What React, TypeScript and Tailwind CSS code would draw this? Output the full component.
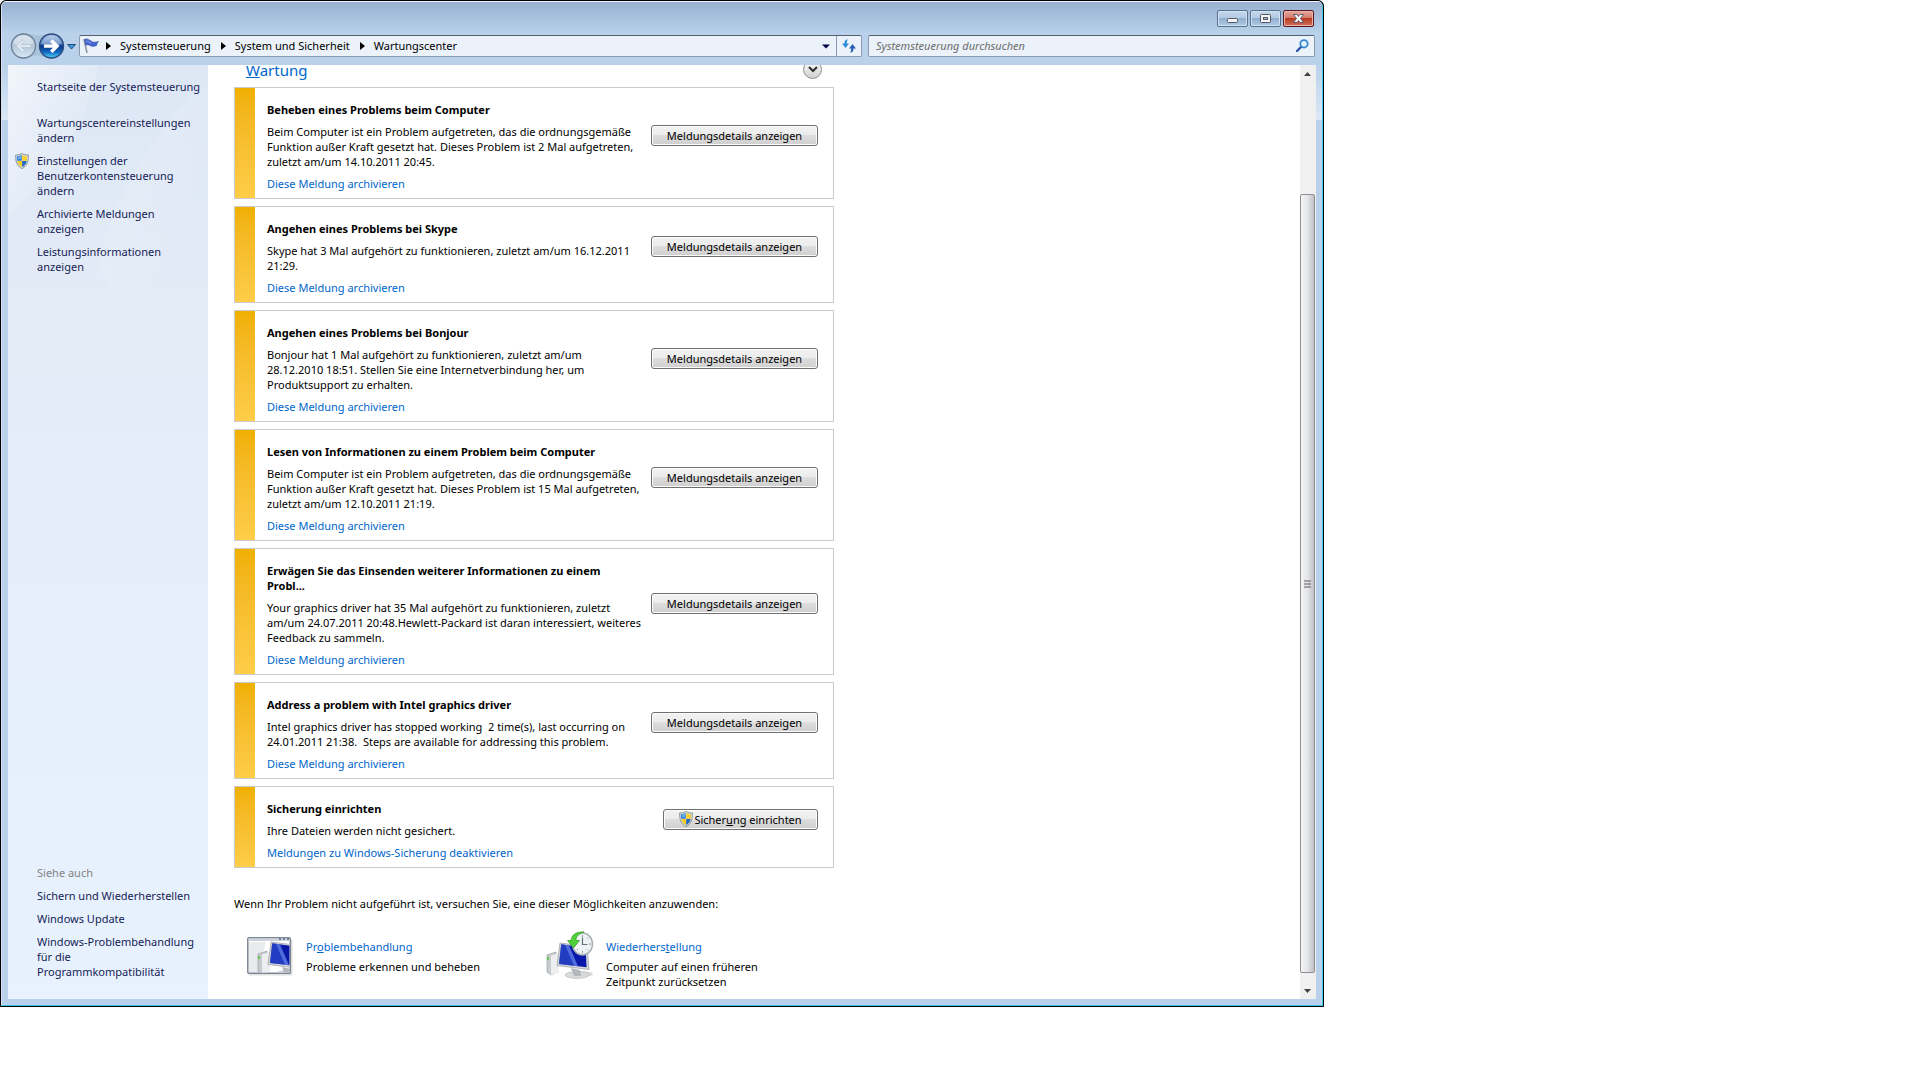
interface Message {
  title: string;
  text: string;
  link: string;
  backup?: boolean;
}

const messages: Message[] = [
  {
    title: 'Beheben eines Problems beim Computer',
    text: 'Beim Computer ist ein Problem aufgetreten, das die ordnungsgemäße\nFunktion außer Kraft gesetzt hat. Dieses Problem ist 2 Mal aufgetreten,\nzuletzt am/um 14.10.2011 20:45.',
    link: 'Diese Meldung archivieren',
  },
  {
    title: 'Angehen eines Problems bei Skype',
    text: 'Skype hat 3 Mal aufgehört zu funktionieren, zuletzt am/um 16.12.2011\n21:29.',
    link: 'Diese Meldung archivieren',
  },
  {
    title: 'Angehen eines Problems bei Bonjour',
    text: 'Bonjour hat 1 Mal aufgehört zu funktionieren, zuletzt am/um\n28.12.2010 18:51. Stellen Sie eine Internetverbindung her, um\nProduktsupport zu erhalten.',
    link: 'Diese Meldung archivieren',
  },
  {
    title: 'Lesen von Informationen zu einem Problem beim Computer',
    text: 'Beim Computer ist ein Problem aufgetreten, das die ordnungsgemäße\nFunktion außer Kraft gesetzt hat. Dieses Problem ist 15 Mal aufgetreten,\nzuletzt am/um 12.10.2011 21:19.',
    link: 'Diese Meldung archivieren',
  },
  {
    title: 'Erwägen Sie das Einsenden weiterer Informationen zu einem\nProbl...',
    text: 'Your graphics driver hat 35 Mal aufgehört zu funktionieren, zuletzt\nam/um 24.07.2011 20:48.Hewlett-Packard ist daran interessiert, weiteres\nFeedback zu sammeln.',
    link: 'Diese Meldung archivieren',
  },
  {
    title: 'Address a problem with Intel graphics driver',
    text: 'Intel graphics driver has stopped working \u00a02 time(s), last occurring on\n24.01.2011 21:38. \u00a0Steps are available for addressing this problem.',
    link: 'Diese Meldung archivieren',
  },
  {
    title: 'Sicherung einrichten',
    text: 'Ihre Dateien werden nicht gesichert.',
    link: 'Meldungen zu Windows-Sicherung deaktivieren',
    backup: true,
  },
];

const crumbs = ['Systemsteuerung', 'System und Sicherheit', 'Wartungscenter'];

const buttonStyle =
  'flex h-[21px] items-center justify-center gap-px rounded-[3px] border border-[#707070] bg-[linear-gradient(#f2f2f2,#ebebeb_50%,#dddddd_50%,#cfcfcf)] whitespace-nowrap inset-shadow-[0_0_0_1px_#fcfcfc]';

function Shield() {
  return (
    <svg className="h-4 w-[14px] shrink-0" viewBox="0 0 14 16" aria-hidden="true">
      <path d="M7 .5C5 1.8 3 2 .7 2 .4 8.500 2 13 7 15.600 12 13 13.600 8.500 13.300 2 11 2 9 1.800 7 .5Z" fill="#dfe4e6" stroke="#7d8b90" strokeWidth=".9" />
      <path d="M6.800 1.900C5.300 2.800 4 3.100 1.900 3.200c0 1.700 0 3.200.3 4.600h4.600Z" fill="#2f7fd6" />
      <path d="M7.200 1.900c1.500.9 2.800 1.200 4.900 1.300 0 1.700 0 3.200-.3 4.600H7.200Z" fill="#fbd02c" />
      <path d="M2.300 8.100c.6 2.700 2 4.800 4.500 6.200V8.100Z" fill="#fbc81e" />
      <path d="M11.700 8.100c-.6 2.700-2 4.800-4.500 6.200V8.100Z" fill="#2468bd" />
      <path d="M3 4c1.400-.1 2.500-.4 3.400-.9v2.500L3.100 6.600Z" fill="#8cc4f5" opacity=".7" />
    </svg>
  );
}

function OrbGradients() {
  return (
    <defs>
      <linearGradient id="orbBack" x1="0" y1="0" x2="0" y2="1">
        <stop offset="0" stopColor="#c5d6e6" />
        <stop offset=".5" stopColor="#b5c8da" />
        <stop offset="1" stopColor="#d9e8f5" />
      </linearGradient>
      <linearGradient id="orbFwd" x1="0" y1="0" x2="0" y2="1">
        <stop offset="0" stopColor="#a9c4e6" />
        <stop offset=".42" stopColor="#3d70b8" />
        <stop offset=".5" stopColor="#0a3684" />
        <stop offset=".75" stopColor="#1368c0" />
        <stop offset="1" stopColor="#4fd8fb" />
      </linearGradient>
    </defs>
  );
}

function Computer() {
  return (
    <>
      <path d="M0 22 9 19v21L4 42 0 39Z" fill="#c9cccf" stroke="#8f9499" strokeWidth=".6" />
      <path d="M4 22.500 12 20v20l-8 2Z" fill="#eceeef" />
      <path d="M1 24v3" stroke="#3fc420" strokeWidth="1.400" />
      <ellipse cx="30" cy="42" rx="12" ry="3.500" fill="#d8dadc" stroke="#adb1b5" strokeWidth=".5" />
      <path d="m24 35 9 2 1 6h-7Z" fill="#b4b8bc" />
      <path d="M13 10 40 13.500 42 36.500 10 32.500Z" fill="#d5d8db" stroke="#989ca1" strokeWidth=".7" />
      <path d="M14.200 11.300 38.600 14.700 39.600 34.200 12 30.900Z" fill="#0a18a8" />
      <path d="M14.200 11.300 22 12.400 31 33.200 12 30.900Z" fill="#3c62dc" opacity=".5" />
      <path d="m18 11.900 4 .5 9 20.800-4-.5Z" fill="#7b9cf5" opacity=".5" />
    </>
  );
}

function TroubleshootIcon() {
  return (
    <svg className="h-12 w-12 shrink-0" viewBox="0 0 48 48" aria-hidden="true">
      <rect x="2.500" y="8.500" width="44" height="36" rx="1" fill="#000" opacity=".12" />
      <rect x="1.800" y="6.800" width="42.500" height="35.500" rx="1" fill="#fff" stroke="#7c8694" strokeWidth="1.500" />
      <path d="M2.500 7.500h41V10h-41Z" fill="#ccd2dc" />
      <path d="M33 8h2M37 8h2M41 8h2" stroke="#56657c" strokeWidth="1.300" />
      <path d="M3 11h17l-8 30H3Z" fill="#e9ebee" />
      <svg x="3" y="10" width="40.500" height="31.500" viewBox="3 10 40.500 31.500">
        <g transform="translate(12 1)">
          <Computer />
        </g>
      </svg>
    </svg>
  );
}

function RestoreIcon() {
  return (
    <svg className="h-12 w-12 shrink-0" viewBox="0 0 48 48" aria-hidden="true">
      <ellipse cx="35" cy="43" rx="12" ry="3" fill="#000" opacity=".15" />
      <g transform="translate(1 2)">
        <Computer />
      </g>
      <ellipse cx="36.500" cy="13" rx="10" ry="11" fill="#eef3f4" stroke="#a8b2b6" strokeWidth="1.500" />
      <path d="M36.500 4v2M36.500 20v2M43 13h2M29 13h2M42 6.500l-1 1M31 19l1-1M42 19.500l-1-1" stroke="#8b969b" />
      <path d="M36.500 6.500V13.500h5" fill="none" stroke="#637178" strokeWidth="1.200" />
      <path d="M38 1C30 .5 25.500 4 25 9.500h-3.500l6 7.500 6-7.500H30C30 5.500 32 3 38 1Z" fill="#4fd03a" stroke="#2f9a24" strokeWidth=".7" />
    </svg>
  );
}

function MessageCard({ message }: { message: Message }) {
  return (
    <section className="flex border border-[#ccc] bg-white">
      <div className="w-5 shrink-0 bg-linear-to-b from-[#f0b000] to-[#ffcd48]" />
      <div className="flex-1 whitespace-pre pt-[14px] pb-[7px] pl-3">
        <h2 className="font-bold">{message.title}</h2>
        <p className="my-[7px]">{message.text}</p>
        <a href="#" className="block text-[#0066cc]">
          {message.link}
        </a>
      </div>
      <div className="flex items-center pr-[15px] pb-4">
        {message.backup ? (
          <button className={buttonStyle + ' w-[155px]'}>
            <Shield />
            <span>
              Sicher<u>u</u>ng einrichten
            </span>
          </button>
        ) : (
          <button className={buttonStyle + ' w-[167px]'}>Meldungsdetails anzeigen</button>
        )}
      </div>
    </section>
  );
}

function TitleBar() {
  const base = 'flex h-[17px] w-[31px] items-center justify-center rounded-[2px] border';
  const blue = ' border-[#56708f] bg-[linear-gradient(#c4d7ea,#b3cae2_48%,#90aecd_50%,#b0cbe6)] inset-shadow-[0_0_0_1px_#d2e2f2]';
  return (
    <div className="flex h-[33px] justify-end gap-[2px] pt-2 pr-2">
      <button aria-label="Minimieren" className={base + blue}>
        <svg className="mt-1 h-[5px] w-[11px]" viewBox="0 0 11 5">
          <rect x=".5" y=".5" width="10" height="4" rx="1" fill="#f6f6f6" stroke="#535666" />
        </svg>
      </button>
      <button aria-label="Maximieren" className={base + blue}>
        <svg className="h-[9px] w-[11px]" viewBox="0 0 11 9">
          <rect x=".5" y=".5" width="10" height="8" rx="1" fill="#f6f6f6" stroke="#535666" />
          <rect x="3.500" y="3.500" width="4" height="2" fill="#a9bdd2" stroke="#535666" />
        </svg>
      </button>
      <button aria-label="Schließen" className={base + ' border-[#5a1620] bg-[linear-gradient(#e6a99e,#d3796b_48%,#b93a22_50%,#d0705a)] inset-shadow-[0_0_0_1px_#e9b4aa]'}>
        <svg className="h-[9px] w-[11px]" viewBox="0 0 11 9">
          <path d="M.5.5H4l1.500 2L7 .5h3.500L7.500 4.500l3 4H7l-1.500-2-1.500 2H.5l3-4Z" fill="#f8f8f8" stroke="#535666" strokeWidth=".9" />
        </svg>
      </button>
    </div>
  );
}

function AddressBar() {
  return (
    <nav className="flex h-[30px] items-start px-[7px]">
      <svg className="-mt-[3px] h-[28px] w-[70px] shrink-0" viewBox="0 0 70 28" aria-hidden="true">
        <OrbGradients />
        <path d="M14 1.500c8 0 9 2 14.500 2S36 1.500 43 1.500a12.500 12.500 0 0 1 0 25c-7 0-9-3-14.500-3s-6.500 3-14.500 3a12.500 12.500 0 0 1 0-25Z" fill="#9fb7d0" opacity=".6" />
        <circle cx="14.500" cy="14" r="12" fill="url(#orbBack)" stroke="#6e8298" strokeWidth="1.300" />
        <path d="M4 11a11 11 0 0 1 21 0c-6 3-15 4-21 0Z" fill="#fff" opacity=".35" />
        <path d="m7 14 6.500-6.500 2 2L12.500 12.500H22v3h-9.500l3 3-2 2Z" fill="#dce7f1" stroke="#a9bccf" strokeWidth=".6" />
        <circle cx="42.500" cy="14" r="12" fill="url(#orbFwd)" stroke="#2b4a7d" strokeWidth="1.300" />
        <path d="M32 11.500a11 11 0 0 1 21 0c-6 2-15 2.500-21 0Z" fill="#fff" opacity=".3" />
        <path d="m50.500 14-7-6.800-2.500 2.500L44 12.400h-9v3.300h9L41 18.500l2.500 2.400Z" fill="#fff" />
        <path d="M58.500 12.500h8L62.500 17Z" fill="#3e9ad6" stroke="#123f75" strokeWidth=".9" />
      </svg>
      <div className="flex h-[22px] flex-1 items-center rounded-[2px] border border-[#8a9bb0] border-t-[#53606f] bg-[#ebf2fa] pl-[2px]">
        <svg className="mb-px h-[18px] w-[18px]" viewBox="0 0 18 18" aria-hidden="true">
          <path d="m2 2 3 14" stroke="#8d96a4" strokeWidth="1.600" />
          <path d="M2.500 2.500c2.500-1.500 4.500 0 6.500 1.500s4 1.500 7.500.5c-1.500 1.200-1.500 2.500-2 4-3 1.300-5 1-6.500 0s-3-1-4.200-.3Z" fill="#4464d0" stroke="#3450a8" strokeWidth=".6" />
          <path d="M4 4.500c2-.7 3.500.8 5 1.800" stroke="#93a9f0" fill="none" />
        </svg>
        {crumbs.map((crumb) => (
          <div key={crumb} className="flex items-center pb-px">
            <svg className="mr-[9px] ml-[6px] h-[8px] w-[5px]" viewBox="0 0 5 8" aria-hidden="true">
              <path d="M0 0v8l5-4Z" fill="#000" />
            </svg>
            <a href="#" className="mr-[4px] text-black">
              {crumb}
            </a>
          </div>
        ))}
        <button aria-label="Vorherige Orte" className="mr-[6px] ml-auto">
          <svg className="h-[5px] w-[8px]" viewBox="0 0 8 5">
            <path d="M0 .5h8L4 4.500Z" fill="#00004c" />
          </svg>
        </button>
        <button aria-label="Aktualisieren" className="flex h-full w-[25px] items-center justify-center border-l border-[#8a9bb0]">
          <svg className="h-[14px] w-[14px]" viewBox="0 0 14 14">
            <path d="M6 .5C3 .5 2.500 2.500 2.500 4.500H0L3.500 9 7 4.500H4.800C4.800 3 5 1.500 6 .5Z" fill="#2f8fd8" />
            <path d="M8 13.500c3 0 3.500-2 3.500-4H14L10.500 5 7 9.500h2.200c0 1.500-.2 3-1.200 4Z" fill="#2c5db5" />
          </svg>
        </button>
      </div>
      <div className="ml-[6px] flex h-[22px] w-[447px] items-center rounded-[2px] border border-[#8a9bb0] border-t-[#53606f] bg-[#ebf2fa] pr-[5px] pb-px pl-[7px]">
        <input
          type="text"
          aria-label="Systemsteuerung durchsuchen"
          placeholder="Systemsteuerung durchsuchen"
          className="min-w-0 flex-1 bg-transparent italic outline-none placeholder:text-[#6d6d6d]"
        />
        <svg className="h-[13px] w-[13px]" viewBox="0 0 13 13" aria-hidden="true">
          <path d="M5.300 7.700 1 12" stroke="#274f9e" strokeWidth="2.200" strokeLinecap="round" />
          <circle cx="8" cy="4.800" r="3.700" fill="#e6f2fc" stroke="#3687cf" strokeWidth="1.800" />
        </svg>
      </div>
    </nav>
  );
}

function Sidebar() {
  return (
    <aside className="relative flex w-[200px] shrink-0 flex-col overflow-hidden bg-linear-to-b from-[#dde7f5] via-[#e3ebf7] via-25% to-[#e8f2ff] pt-[14px] pr-1 pb-5 pl-[29px] text-[#151c55]">
      <svg className="absolute top-0 left-0 h-[300px] w-[200px]" viewBox="0 0 200 300" aria-hidden="true">
        <defs>
          <linearGradient id="glow" x1="0" y1="0" x2="1" y2="1">
            <stop offset="0" stopColor="#fff" stopOpacity=".6" />
            <stop offset=".7" stopColor="#fff" stopOpacity="0" />
          </linearGradient>
        </defs>
        <path d="M0 0h90C80 60 40 120 0 150Z" fill="url(#glow)" />
        <path d="M200 15C150 60 100 140 90 200l40 90h70Z" fill="url(#glow)" opacity=".35" />
      </svg>
      <div className="relative flex flex-1 flex-col gap-2">
        <a href="#" className="mb-[13px] whitespace-nowrap">Startseite der Systemsteuerung</a>
        <a href="#">Wartungscentereinstellungen<br />ändern</a>
        <a href="#" className="-ml-[22px] flex gap-2">
          <Shield />
          <span>Einstellungen der<br />Benutzerkontensteuerung<br />ändern</span>
        </a>
        <a href="#">Archivierte Meldungen<br />anzeigen</a>
        <a href="#">Leistungsinformationen<br />anzeigen</a>
        <h2 className="mt-auto text-[#838383]">Siehe auch</h2>
        <a href="#">Sichern und Wiederherstellen</a>
        <a href="#">Windows Update</a>
        <a href="#" className="whitespace-nowrap">Windows-Problembehandlung<br />für die<br />Programmkompatibilität</a>
      </div>
    </aside>
  );
}

function ScrollBar() {
  return (
    <div className="flex w-4 shrink-0 flex-col items-center bg-[#f0f0f0] pr-px" aria-hidden="true">
      <svg className="mt-[7px] h-[4px] w-[7px]" viewBox="0 0 7 4">
        <path d="M0 4h7L3.500 0Z" fill="#404040" />
      </svg>
      <div className="mt-[118px] flex w-full flex-1 items-center justify-center rounded-[2px] border border-[#8e8f91] bg-linear-to-r from-[#f5f5f5] via-[#e4e5e7] via-50% to-[#bfc0c4]">
        <svg className="h-[8px] w-[7px]" viewBox="0 0 7 8">
          <path d="M0 1h7M0 4h7M0 7h7" stroke="#5a5a5a" strokeWidth="1.200" />
        </svg>
      </div>
      <svg className="mt-4 mb-[6px] h-[4px] w-[7px]" viewBox="0 0 7 4">
        <path d="M0 0h7L3.500 4Z" fill="#404040" />
      </svg>
    </div>
  );
}

export default function App() {
  return (
    <div className="min-h-screen bg-white font-['Noto_Sans','Open_Sans',sans-serif] text-[11px] leading-[15px] text-black">
      <div className="w-full max-w-[1324px] overflow-hidden rounded-t-[6px] border border-black bg-black">
        <div className="rounded-t-[5px] border border-t-[#eef5fc] border-r-[#3fd0ee] border-b-[#35c5e8] border-l-[#d3e3f4] bg-[#b9d1ea]">
          <header className="rounded-t-[4px] bg-linear-to-b from-[#98b1d0] to-[#b9d1ea] to-50%">
            <TitleBar />
            <AddressBar />
          </header>
          <div className="bg-[linear-gradient(#b9d1ea,#dbe8f6)] bg-size-[100%_55px] bg-no-repeat px-[6px] pb-[6px]">
            <div className="flex">
              <Sidebar />
              <main className="min-w-0 flex-1 overflow-hidden bg-white pb-[10px]">
                <div className="ml-[26px] w-[600px]">
                  {/* the list is scrolled, so this heading sits half under the toolbar */}
                  <div className="-mt-[5px] flex h-[27px] items-start justify-between px-3">
                    <a href="#" className="text-[15px] leading-[20px] text-[#0066cc]">
                      <u>W</u>artung
                    </a>
                    <button aria-label="Wartung einblenden" className="flex h-[19px] w-[19px] items-center justify-center rounded-full border border-[#8f8f8f] bg-linear-to-b from-white to-[#cfcfcf]">
                      <svg className="h-[7px] w-[10px]" viewBox="0 0 10 7">
                        <path d="m1 1 4 4 4-4" fill="none" stroke="#333" strokeWidth="2.200" />
                      </svg>
                    </button>
                  </div>
                  <div className="flex flex-col gap-[7px]">
                    {messages.map((message) => (
                      <MessageCard key={message.title + message.text} message={message} />
                    ))}
                  </div>
                  <p className="mt-7">Wenn Ihr Problem nicht aufgeführt ist, versuchen Sie, eine dieser Möglichkeiten anzuwenden:</p>
                  <div className="mt-5 grid grid-cols-2">
                    <div className="flex gap-3 pl-3">
                      <TroubleshootIcon />
                      <div className="pt-2">
                        <a href="#" className="block text-[#0066cc]">Pr<u>o</u>blembehandlung</a>
                        <p className="mt-[5px]">Probleme erkennen und beheben</p>
                      </div>
                    </div>
                    <div className="flex gap-3 pl-3">
                      <RestoreIcon />
                      <div className="pt-2">
                        <a href="#" className="block text-[#0066cc]">Wiederhers<u>t</u>ellung</a>
                        <p className="mt-[5px]">Computer auf einen früheren<br />Zeitpunkt zurücksetzen</p>
                      </div>
                    </div>
                  </div>
                </div>
              </main>
              <ScrollBar />
            </div>
          </div>
        </div>
      </div>
    </div>
  );
}
